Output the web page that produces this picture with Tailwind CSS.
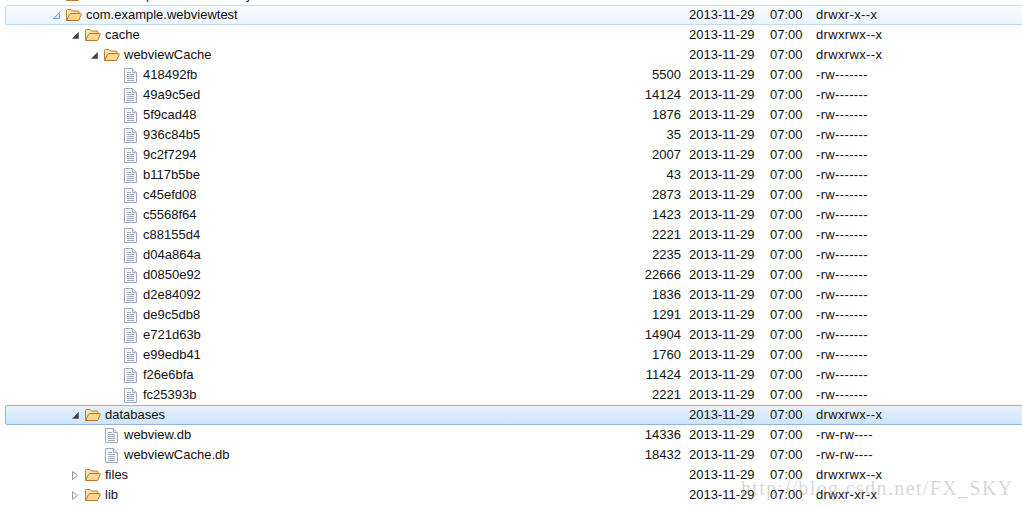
<!DOCTYPE html>
<html lang="en">
<head>
    <meta charset="UTF-8">
    <title>File Explorer</title>
    <script src="https://cdn.jsdelivr.net/npm/@tailwindcss/browser@4"></script>
</head>
<body class="bg-white text-[#111111] text-[13px] font-['Liberation_Sans',sans-serif] overflow-hidden h-[506px] relative">

    <!-- Tree rows -->
    <div id="tree" class="-mt-[15px]"></div>

    <!-- Watermark -->
    <div class="absolute left-[741px] top-[476px] text-[20px] leading-[24px] tracking-[1.37px] text-[#8a8a80]/35 font-['Liberation_Serif',serif] whitespace-pre">http://blog.csdn.net/FX_SKY</div>

    <script>
        const ICONS = {
            folder: `<svg width="16" height="14" viewBox="0 0 16 14"><path d="M.5 12.500V2.500q0-1 1-1h3.500l1.500 1.500h5.500q1 0 1 1v1.500" fill="#f8e2b0" stroke="#b5802f"/><path d="M.5 12.500L3.500 6.500q.4-1 1.400-1H14.500q1 0 .7 1l-2.200 5.300q-.3.700-1 .700z" fill="#fcd98f" stroke="#b5782a"/></svg>`,
            file: `<svg width="13" height="15" viewBox="0 0 13 15"><path d="M.5.500H8.500L12.500 4.500V14.500H.5z" fill="#f7f8fb" stroke="#a0a9bf"/><path d="M8.500.500V4.500H12.500" fill="#e4e8f1" stroke="#a0a9bf"/><path d="M3 4.500H7M3 6.500H10M3 8.500H10M3 10.500H10M3 12.500H10" stroke="#9eaac4" fill="none"/></svg>`
        };
        const ARROWS = {
            open: `<svg width="9" height="9" viewBox="0 0 9 9"><path d="M7.500 1.500V7.500H1.500z" fill="#3f3f3f" stroke="#6b6b6b"/></svg>`,
            openSel: `<svg width="9" height="9" viewBox="0 0 9 9"><path d="M7.500 1.500V7.500H1.500z" fill="#c9ecfb" stroke="#4fb8e8"/></svg>`,
            closed: `<svg width="9" height="11" viewBox="0 0 9 11"><path d="M1.500 1.500L6.500 5.500L1.500 9.500z" fill="#fff" stroke="#9a9a9a"/></svg>`,
            none: ''
        };

        const D = 'drwxrwx--x', F = '-rw-------', G = '-rw-rw----';
        // depth, arrow, icon, name, size, perms, selection
        const rows = [
            [0, 'open', 'folder', 'com.example.webviewlibrary', '', '', ''],
            [0, 'openSel', 'folder', 'com.example.webviewtest', '', 'drwxr-x--x', 'light'],
            [1, 'open', 'folder', 'cache', '', D, ''],
            [2, 'open', 'folder', 'webviewCache', '', D, ''],
            [3, 'none', 'file', '418492fb', '5500', F, ''],
            [3, 'none', 'file', '49a9c5ed', '14124', F, ''],
            [3, 'none', 'file', '5f9cad48', '1876', F, ''],
            [3, 'none', 'file', '936c84b5', '35', F, ''],
            [3, 'none', 'file', '9c2f7294', '2007', F, ''],
            [3, 'none', 'file', 'b117b5be', '43', F, ''],
            [3, 'none', 'file', 'c45efd08', '2873', F, ''],
            [3, 'none', 'file', 'c5568f64', '1423', F, ''],
            [3, 'none', 'file', 'c88155d4', '2221', F, ''],
            [3, 'none', 'file', 'd04a864a', '2235', F, ''],
            [3, 'none', 'file', 'd0850e92', '22666', F, ''],
            [3, 'none', 'file', 'd2e84092', '1836', F, ''],
            [3, 'none', 'file', 'de9c5db8', '1291', F, ''],
            [3, 'none', 'file', 'e721d63b', '14904', F, ''],
            [3, 'none', 'file', 'e99edb41', '1760', F, ''],
            [3, 'none', 'file', 'f26e6bfa', '11424', F, ''],
            [3, 'none', 'file', 'fc25393b', '2221', F, ''],
            [1, 'open', 'folder', 'databases', '', D, 'strong'],
            [2, 'none', 'file', 'webview.db', '14336', G, ''],
            [2, 'none', 'file', 'webviewCache.db', '18432', G, ''],
            [1, 'closed', 'folder', 'files', '', D, ''],
            [1, 'closed', 'folder', 'lib', '', 'drwxr-xr-x', '']
        ];

        const selClass = {
            '': 'border-transparent',
            light: 'border-[#bcdcf8] bg-gradient-to-b from-[#f8fbff] to-[#ecf5fe]',
            strong: 'border-[#8db6e0] bg-gradient-to-b from-[#e6f1fd] to-[#cfe4fb]'
        };

        document.getElementById('tree').innerHTML = rows.map(([depth, arrow, icon, name, size, perms, sel], i) => `
            <div class="flex items-center h-5 ml-[5px] w-[1021px] border rounded-l-[2px] whitespace-nowrap ${selClass[sel]}">
                <span class="shrink-0" style="width:${46 + 19 * depth}px"></span>
                <span class="w-[14px] shrink-0 flex items-center">${ARROWS[arrow]}</span>
                <span class="w-[20px] shrink-0 flex items-center ${icon === 'file' ? 'pl-[1px]' : ''}">${ICONS[icon]}</span>
                <span class="flex-1 min-w-0">${name}</span>
                <span class="w-[50px] shrink-0 text-right">${size}</span>
                <span class="w-[81px] ml-2 shrink-0">${i ? '2013-11-29' : ''}</span>
                <span class="w-[46px] shrink-0">${i ? '07:00' : ''}</span>
                <span class="w-[209px] shrink-0 tracking-[0.35px]">${perms}</span>
            </div>`).join('');
    </script>
</body>
</html>
